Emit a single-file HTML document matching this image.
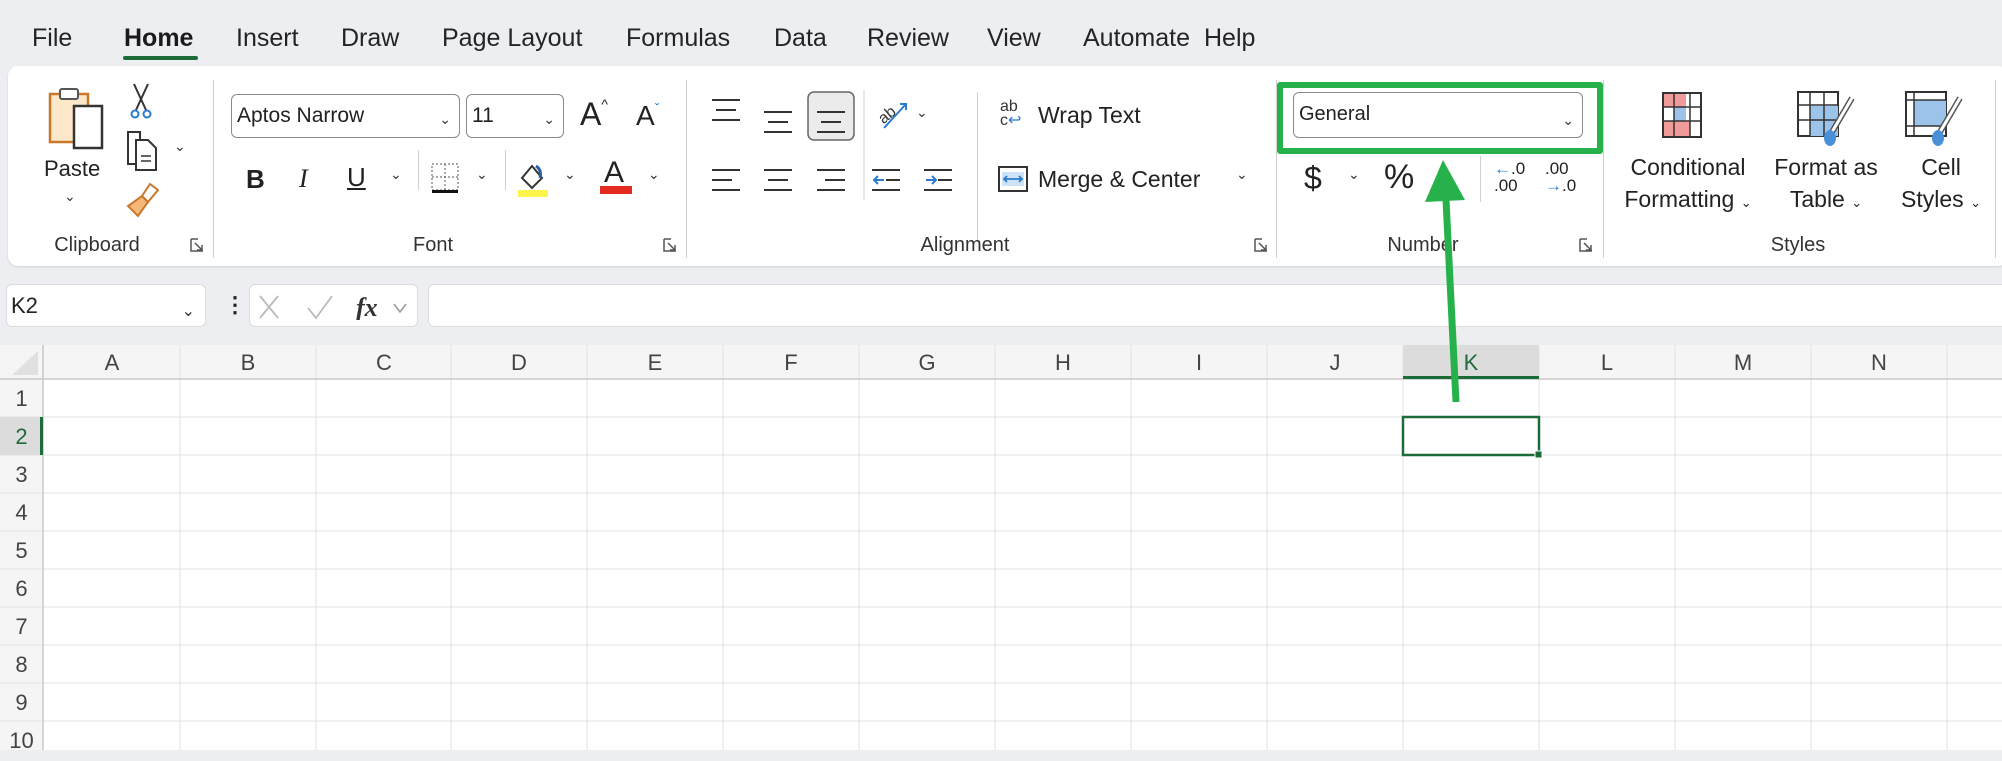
<!DOCTYPE html>
<html><head><meta charset="utf-8">
<style>
*{margin:0;padding:0;box-sizing:border-box}
body{width:2002px;height:750px;overflow:hidden;background:#eceef1;font-family:"Liberation Sans Narrow","Liberation Sans",sans-serif;color:#222;position:relative}
.a{position:absolute;white-space:nowrap}
.tab{position:absolute;top:24px;font-size:25px;color:#242424}
.lbl{position:absolute;top:234px;font-size:20px;color:#333;transform:translateX(-50%)}
.sep{position:absolute;top:80px;width:1px;height:178px;background:#d0d0d0}
.t{font-size:23px;color:#222}
.chev{position:absolute;font-size:14px;color:#333}
.box{position:absolute;border:1.5px solid #8a8a8a;border-radius:6px;background:#fff;font-size:21px;padding-left:5px;line-height:41px}
.grid{position:absolute;left:0;top:345px;width:2002px;height:405px;background:#fff}
.ch{position:absolute;top:345px;height:34px;font-size:22px;color:#444;text-align:center;line-height:36px;width:136px}
.rh{position:absolute;left:0;width:43px;font-size:22px;color:#444;text-align:center;height:38px;line-height:40px}
</style></head><body>

<div class="tab" style="left:32px">File</div>
<div class="tab" style="left:124px;font-weight:bold;color:#1b1b1b">Home</div>
<div class="a" style="left:123px;top:56px;width:75px;height:4px;background:#1e6b3a;border-radius:2px"></div>
<div class="tab" style="left:236px">Insert</div>
<div class="tab" style="left:341px">Draw</div>
<div class="tab" style="left:442px">Page Layout</div>
<div class="tab" style="left:626px">Formulas</div>
<div class="tab" style="left:774px">Data</div>
<div class="tab" style="left:867px">Review</div>
<div class="tab" style="left:987px">View</div>
<div class="tab" style="left:1083px">Automate</div>
<div class="tab" style="left:1204px">Help</div>

<div class="a" style="left:8px;top:66px;width:2000px;height:200px;background:#fff;border-radius:10px;box-shadow:0 1px 2px rgba(0,0,0,.12)"></div>

<!-- Clipboard -->
<svg class="a" style="left:46px;top:84px" width="62" height="66" viewBox="0 0 62 66"><rect x="4" y="10" width="38" height="48" fill="#fde9c9" stroke="#c9772b" stroke-width="2.5"/><rect x="14" y="5" width="18" height="10" rx="2" fill="#fff" stroke="#555" stroke-width="2"/><rect x="28" y="22" width="28" height="42" fill="#fff" stroke="#333" stroke-width="2.5"/></svg>
<div class="a t" style="left:44px;top:156px;font-size:22px">Paste</div>
<div class="chev" style="left:64px;top:188px">&#8964;</div>
<svg class="a" style="left:130px;top:82px" width="22" height="38" viewBox="0 0 22 38"><path d="M4 2 L16 28 M18 2 L6 28" stroke="#333" stroke-width="2" fill="none"/><circle cx="5" cy="32" r="3.5" fill="none" stroke="#2b7bd0" stroke-width="2"/><circle cx="17" cy="32" r="3.5" fill="none" stroke="#2b7bd0" stroke-width="2"/></svg>
<svg class="a" style="left:126px;top:130px" width="34" height="42" viewBox="0 0 34 42"><path d="M2 2 H14 V34 H2 Z" fill="#fff" stroke="#333" stroke-width="2"/><path d="M10 10 H22 L30 18 V40 H10 Z" fill="#fff" stroke="#333" stroke-width="2"/><path d="M15 26H25M15 31H25" stroke="#333" stroke-width="1.5"/></svg>
<div class="chev" style="left:174px;top:138px">&#8964;</div>
<svg class="a" style="left:126px;top:182px" width="34" height="38" viewBox="0 0 34 38"><path d="M24 2 L32 8 L22 20 L16 14 Z" fill="#fff" stroke="#c9772b" stroke-width="2"/><path d="M16 14 L22 20 L12 34 L2 24 Z" fill="#f4b87a" stroke="#c9772b" stroke-width="2"/></svg>
<div class="lbl" style="left:97px">Clipboard</div>
<svg class="a" style="left:190px;top:238px" width="14" height="14"><path d="M1 1V13H13M1 1h7M5 5L12 12M12 7V12H7" stroke="#555" fill="none" stroke-width="1.5"/></svg>
<div class="sep" style="left:213px"></div>

<!-- Font -->
<div class="box" style="left:231px;top:94px;width:229px;height:44px">Aptos Narrow<span class="chev" style="right:8px;top:4px">&#8964;</span></div>
<div class="box" style="left:466px;top:94px;width:98px;height:44px">11<span class="chev" style="right:8px;top:4px">&#8964;</span></div>
<div class="a" style="left:580px;top:96px;font-size:32px">A<span style="font-size:14px;vertical-align:top">^</span></div>
<div class="a" style="left:636px;top:100px;font-size:28px">A<span style="font-size:14px;vertical-align:top;color:#2b7bd0">&#711;</span></div>
<div class="a" style="left:246px;top:164px;font-size:26px;font-weight:bold">B</div>
<div class="a" style="left:299px;top:164px;font-size:26px;font-style:italic;font-family:'Liberation Serif',serif">I</div>
<div class="a" style="left:347px;top:162px;font-size:26px;text-decoration:underline">U</div>
<div class="chev" style="left:390px;top:166px">&#8964;</div>
<svg class="a" style="left:430px;top:162px" width="30" height="34"><rect x="2" y="2" width="26" height="26" fill="none" stroke="#555" stroke-dasharray="2 2"/><path d="M15 2V28M2 15H28" stroke="#555" stroke-dasharray="2 2"/><rect x="2" y="28" width="26" height="3" fill="#111"/></svg>
<div class="chev" style="left:476px;top:166px">&#8964;</div>
<svg class="a" style="left:516px;top:160px" width="32" height="38"><path d="M6 18 L16 6 L26 18 L16 28 Z" fill="#fff" stroke="#333" stroke-width="2"/><path d="M20 6 q6 4 4 12" stroke="#2b5fb0" stroke-width="3" fill="none"/><rect x="2" y="30" width="30" height="7" fill="#fbf44a"/></svg>
<div class="chev" style="left:564px;top:166px">&#8964;</div>
<div class="a" style="left:604px;top:156px;font-size:30px">A</div>
<div class="a" style="left:600px;top:186px;width:32px;height:8px;background:#e32b20"></div>
<div class="chev" style="left:648px;top:166px">&#8964;</div>
<div class="sep" style="left:418px;top:150px;height:40px"></div>
<div class="sep" style="left:505px;top:150px;height:40px"></div>
<div class="lbl" style="left:433px">Font</div>
<svg class="a" style="left:663px;top:238px" width="14" height="14"><path d="M1 1V13H13M1 1h7M5 5L12 12M12 7V12H7" stroke="#555" fill="none" stroke-width="1.5"/></svg>
<div class="sep" style="left:686px"></div>

<!-- Alignment -->
<svg class="a" style="left:700px;top:90px" width="290" height="110">
<g stroke="#333" stroke-width="2">
<path d="M12 10h28M16 20h20M12 30h28"/>
<path d="M64 22h28M68 32h20M64 42h28"/>
</g>
<rect x="108" y="2" width="46" height="48" rx="6" fill="#ebebeb" stroke="#666" stroke-width="1.5"/>
<g stroke="#333" stroke-width="2"><path d="M117 22h28M121 32h20M117 42h28"/>
<path d="M12 80h28M12 90h20M12 100h28"/><path d="M64 80h28M68 90h20M64 100h28"/><path d="M117 80h28M125 90h20M117 100h28"/>
<path d="M172 80h28M186 90h14M172 100h28M224 80h28M238 90h14M224 100h28"/></g>
<path d="M174 90h10M178 86l-4 4 4 4" stroke="#2b7bd0" stroke-width="2" fill="none"/>
<path d="M226 90h10M232 86l4 4-4 4" stroke="#2b7bd0" stroke-width="2" fill="none"/>
<text x="176" y="30" font-size="16" fill="#333" transform="rotate(-40 186 22)">ab</text>
<path d="M184 38 L206 14 M200 14h6v6" stroke="#2b7bd0" stroke-width="2" fill="none"/>
<path d="M164 0V110" stroke="#d0d0d0"/>
</svg>
<div class="chev" style="left:916px;top:104px">&#8964;</div>
<div class="sep" style="left:977px;top:92px;height:150px"></div>
<div class="a" style="left:1000px;top:100px;font-size:16px;line-height:14px;color:#333">ab<br>c<span style="color:#2b7bd0">↩</span></div>
<div class="a t" style="left:1038px;top:102px">Wrap Text</div>
<svg class="a" style="left:998px;top:164px" width="30" height="30"><rect x="1" y="3" width="28" height="24" fill="#fff" stroke="#333" stroke-width="2"/><rect x="4" y="8" width="22" height="14" fill="#cfe3f7"/><path d="M6 15h18M9 12l-3 3 3 3M21 12l3 3-3 3" stroke="#2b7bd0" stroke-width="1.8" fill="none"/></svg>
<div class="a t" style="left:1038px;top:166px">Merge &amp; Center</div>
<div class="chev" style="left:1236px;top:166px">&#8964;</div>
<div class="lbl" style="left:965px">Alignment</div>
<svg class="a" style="left:1254px;top:238px" width="14" height="14"><path d="M1 1V13H13M1 1h7M5 5L12 12M12 7V12H7" stroke="#555" fill="none" stroke-width="1.5"/></svg>
<div class="sep" style="left:1276px"></div>

<!-- Number -->
<div class="box" style="left:1293px;top:92px;width:290px;height:46px;font-size:20px;line-height:43px">General<span class="chev" style="right:8px;top:6px">&#8964;</span></div>
<div class="a" style="left:1304px;top:160px;font-size:32px">$</div>
<div class="chev" style="left:1348px;top:166px">&#8964;</div>
<div class="a" style="left:1384px;top:158px;font-size:34px">%</div>
<div class="a" style="left:1440px;top:156px;font-size:34px;font-weight:bold">,</div>
<div class="sep" style="left:1480px;top:156px;height:46px"></div>
<div class="a" style="left:1494px;top:160px;font-size:17px;line-height:17px"><span style="color:#2b7bd0">&#8592;</span>.0<br>.00</div>
<div class="a" style="left:1545px;top:160px;font-size:17px;line-height:17px">.00<br><span style="color:#2b7bd0">&#8594;</span>.0</div>
<div class="lbl" style="left:1423px">Number</div>
<svg class="a" style="left:1579px;top:238px" width="14" height="14"><path d="M1 1V13H13M1 1h7M5 5L12 12M12 7V12H7" stroke="#555" fill="none" stroke-width="1.5"/></svg>
<div class="sep" style="left:1603px"></div>

<!-- Styles -->
<svg class="a" style="left:1662px;top:92px" width="40" height="46"><rect x="1" y="1" width="38" height="44" fill="#fff" stroke="#333" stroke-width="2"/><rect x="2" y="2" width="22" height="13" fill="#f19a9a"/><rect x="12" y="15" width="12" height="14" fill="#9cc3ea"/><rect x="2" y="29" width="26" height="15" fill="#f19a9a"/><path d="M1 15H39M1 29H39M12 1V45M28 1V45" stroke="#333" stroke-width="1.5"/></svg>
<div class="a t" style="left:1688px;top:154px;transform:translateX(-50%)">Conditional</div>
<div class="a t" style="left:1688px;top:186px;transform:translateX(-50%)">Formatting <span style="font-size:13px">&#8964;</span></div>
<svg class="a" style="left:1796px;top:90px" width="64" height="58"><rect x="2" y="2" width="40" height="44" fill="#fff" stroke="#333" stroke-width="2"/><rect x="14" y="16" width="28" height="30" fill="#9cc3ea"/><path d="M2 15H42M2 30H42M14 2V46M28 2V46" stroke="#333" stroke-width="1.5"/><path d="M56 8 L36 42" stroke="#555" stroke-width="6"/><path d="M56 8 L36 42" stroke="#fff" stroke-width="3"/><ellipse cx="34" cy="48" rx="6" ry="8" fill="#4a90d9"/></svg>
<div class="a t" style="left:1826px;top:154px;transform:translateX(-50%)">Format as</div>
<div class="a t" style="left:1826px;top:186px;transform:translateX(-50%)">Table <span style="font-size:13px">&#8964;</span></div>
<svg class="a" style="left:1904px;top:90px" width="64" height="58"><rect x="2" y="2" width="40" height="44" fill="#fff" stroke="#333" stroke-width="2"/><rect x="10" y="10" width="32" height="26" fill="#9cc3ea"/><path d="M2 10H42M10 2V46M2 36H42" stroke="#333" stroke-width="1.5"/><path d="M56 8 L36 42" stroke="#555" stroke-width="6"/><path d="M56 8 L36 42" stroke="#fff" stroke-width="3"/><ellipse cx="34" cy="48" rx="6" ry="8" fill="#4a90d9"/></svg>
<div class="a t" style="left:1941px;top:154px;transform:translateX(-50%)">Cell</div>
<div class="a t" style="left:1941px;top:186px;transform:translateX(-50%)">Styles <span style="font-size:13px">&#8964;</span></div>
<div class="lbl" style="left:1798px">Styles</div>
<div class="sep" style="left:1995px"></div>

<!-- formula bar -->
<div class="a" style="left:6px;top:284px;width:200px;height:43px;background:#fff;border:1px solid #dcdcdc;border-radius:6px;font-size:22px;line-height:42px;padding-left:4px">K2<span class="chev" style="right:10px;top:6px;font-size:16px">&#8964;</span></div>
<div class="a" style="left:224px;top:292px;font-size:22px;font-weight:bold">&#8942;</div>
<div class="a" style="left:249px;top:284px;width:169px;height:43px;background:#fff;border:1px solid #dcdcdc;border-radius:6px"></div>
<svg class="a" style="left:258px;top:294px" width="160" height="26"><path d="M2 2L20 24M20 2L2 24" stroke="#bbb" stroke-width="1.8"/><path d="M50 14L58 24L74 2" stroke="#bbb" stroke-width="1.8" fill="none"/><text x="98" y="22" font-family="Liberation Serif" font-style="italic" font-weight="bold" font-size="26" fill="#333">fx</text><path d="M136 10l6 8 6-8" stroke="#999" stroke-width="1.5" fill="none"/></svg>
<div class="a" style="left:428px;top:284px;width:1590px;height:43px;background:#fff;border:1px solid #dcdcdc;border-radius:6px"></div>

<!-- grid -->
<div class="grid"></div>
<svg class="a" style="left:0;top:345px" width="2002" height="405">
<rect x="0" y="0" width="2002" height="34" fill="#f5f5f5"/>
<rect x="0" y="0" width="43" height="405" fill="#f5f5f5"/>
<path d="M38 6 L38 30 L12 30 Z" fill="#e0e0e0"/>
<rect x="1403" y="0" width="136" height="34" fill="#dcdcdc"/>
<rect x="0" y="72" width="43" height="38" fill="#dcdcdc"/>
<g stroke="#e1e1e1" stroke-width="1">
<path d="M180 0V405M316 0V405M451 0V405M587 0V405M723 0V405M859 0V405M995 0V405M1131 0V405M1267 0V405M1403 0V405M1539 0V405M1675 0V405M1811 0V405M1947 0V405"/>
<path d="M0 72H2002M0 110H2002M0 148H2002M0 186H2002M0 224H2002M0 262H2002M0 300H2002M0 338H2002M0 376H2002"/>
</g>
<path d="M0 34H2002M43 0V405" stroke="#c8c8c8" stroke-width="1.5"/>
<rect x="1403" y="31" width="136" height="3" fill="#1e6b3a"/>
<rect x="40" y="72" width="3" height="38" fill="#1e6b3a"/>
<rect x="1403" y="72" width="136" height="38" fill="none" stroke="#1e6b3a" stroke-width="2.5"/>
<rect x="1535" y="106" width="7" height="7" fill="#1e6b3a" stroke="#fff" stroke-width="1"/>
</svg>
<div class="ch" style="left:44px">A</div><div class="ch" style="left:180px">B</div><div class="ch" style="left:316px">C</div><div class="ch" style="left:451px">D</div><div class="ch" style="left:587px">E</div><div class="ch" style="left:723px">F</div><div class="ch" style="left:859px">G</div><div class="ch" style="left:995px">H</div><div class="ch" style="left:1131px">I</div><div class="ch" style="left:1267px">J</div><div class="ch" style="left:1403px;color:#1e6b3a">K</div><div class="ch" style="left:1539px">L</div><div class="ch" style="left:1675px">M</div><div class="ch" style="left:1811px">N</div>
<div class="rh" style="top:379px">1</div><div class="rh" style="top:417px;color:#1e6b3a">2</div><div class="rh" style="top:455px">3</div><div class="rh" style="top:493px">4</div><div class="rh" style="top:531px">5</div><div class="rh" style="top:569px">6</div><div class="rh" style="top:607px">7</div><div class="rh" style="top:645px">8</div><div class="rh" style="top:683px">9</div><div class="rh" style="top:721px">10</div>

<!-- annotation -->
<div class="a" style="left:1277px;top:82px;width:326px;height:72px;border:6px solid #27b14a;border-radius:3px"></div>
<svg class="a" style="left:0;top:0" width="2002" height="750"><path d="M1456 402 L1446 200" stroke="#27b14a" stroke-width="7"/><path d="M1443 160 L1425 202 L1465 200 Z" fill="#27b14a"/></svg>
</body></html>
